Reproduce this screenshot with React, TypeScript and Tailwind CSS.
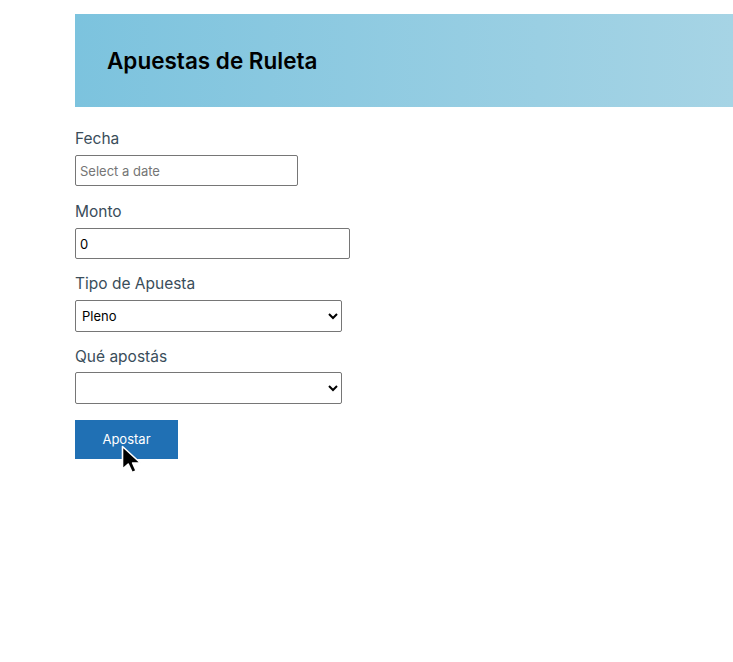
export default function App() {
  return (
    <div className="min-h-screen bg-white font-['Inter',sans-serif] pt-[14px]">
      <header className="ml-[75px] flex h-[93px] items-center bg-gradient-to-r from-[#7cc3de] to-[#a6d4e5] pl-[32px]">
        <h1 className="text-[22.5px] font-semibold text-black">Apuestas de Ruleta</h1>
      </header>

      <form className="ml-[75px] flex flex-col pt-[19px]" onSubmit={(e) => e.preventDefault()}>
        <label className="pt-px text-[15.5px] leading-[24px] text-[#3a4d5a]">Fecha</label>
        <input
          type="text"
          placeholder="Select a date"
          className="mt-[4px] h-[31px] w-[223px] rounded-[2px] border border-[#767676] px-[4px] text-[13px] text-black placeholder:text-[#757575]"
        />

        <label className="mt-[13px] pt-px text-[15.5px] leading-[24px] text-[#3a4d5a]">Monto</label>
        <input
          type="number"
          defaultValue={0}
          className="mt-[4px] h-[31px] w-[275px] rounded-[2px] border border-[#767676] px-[4px] text-[13px] text-black"
        />

        <label className="mt-[12px] pt-px text-[15.5px] leading-[24px] text-[#3a4d5a]">Tipo de Apuesta</label>
        <select
          defaultValue="pleno"
          className="mt-[4px] h-[32px] w-[267px] rounded-[2px] border border-[#767676] bg-white pl-[2px] text-[13px] text-black"
        >
          <option value="pleno">Pleno</option>
          <option value="color">Color</option>
          <option value="paridad">Paridad</option>
        </select>

        <label className="mt-[12px] pt-px text-[15.5px] leading-[24px] text-[#3a4d5a]">Qué apostás</label>
        <select className="mt-[3px] h-[32px] w-[267px] rounded-[2px] border border-[#767676] bg-white pl-[2px] text-[13px] text-black">
          <option value=""></option>
        </select>

        <div className="relative mt-[16px] w-[103px]">
          <button
            type="submit"
            className="h-[39px] w-[103px] bg-[#2070b4] text-[13px] text-white"
          >
            Apostar
          </button>
          <svg
            className="absolute left-[45px] top-[24px]"
            width="26"
            height="32"
            viewBox="0 0 26 32"
          >
            <path
              d="M2.5 2.5 L2.5 25 L8.2 20 L12.2 28.5 L16.2 26.8 L12.6 19 L20.5 19 Z"
              fill="#000"
              stroke="#fff"
              strokeWidth="1.6"
              strokeLinejoin="round"
            />
          </svg>
        </div>
      </form>
    </div>
  )
}
